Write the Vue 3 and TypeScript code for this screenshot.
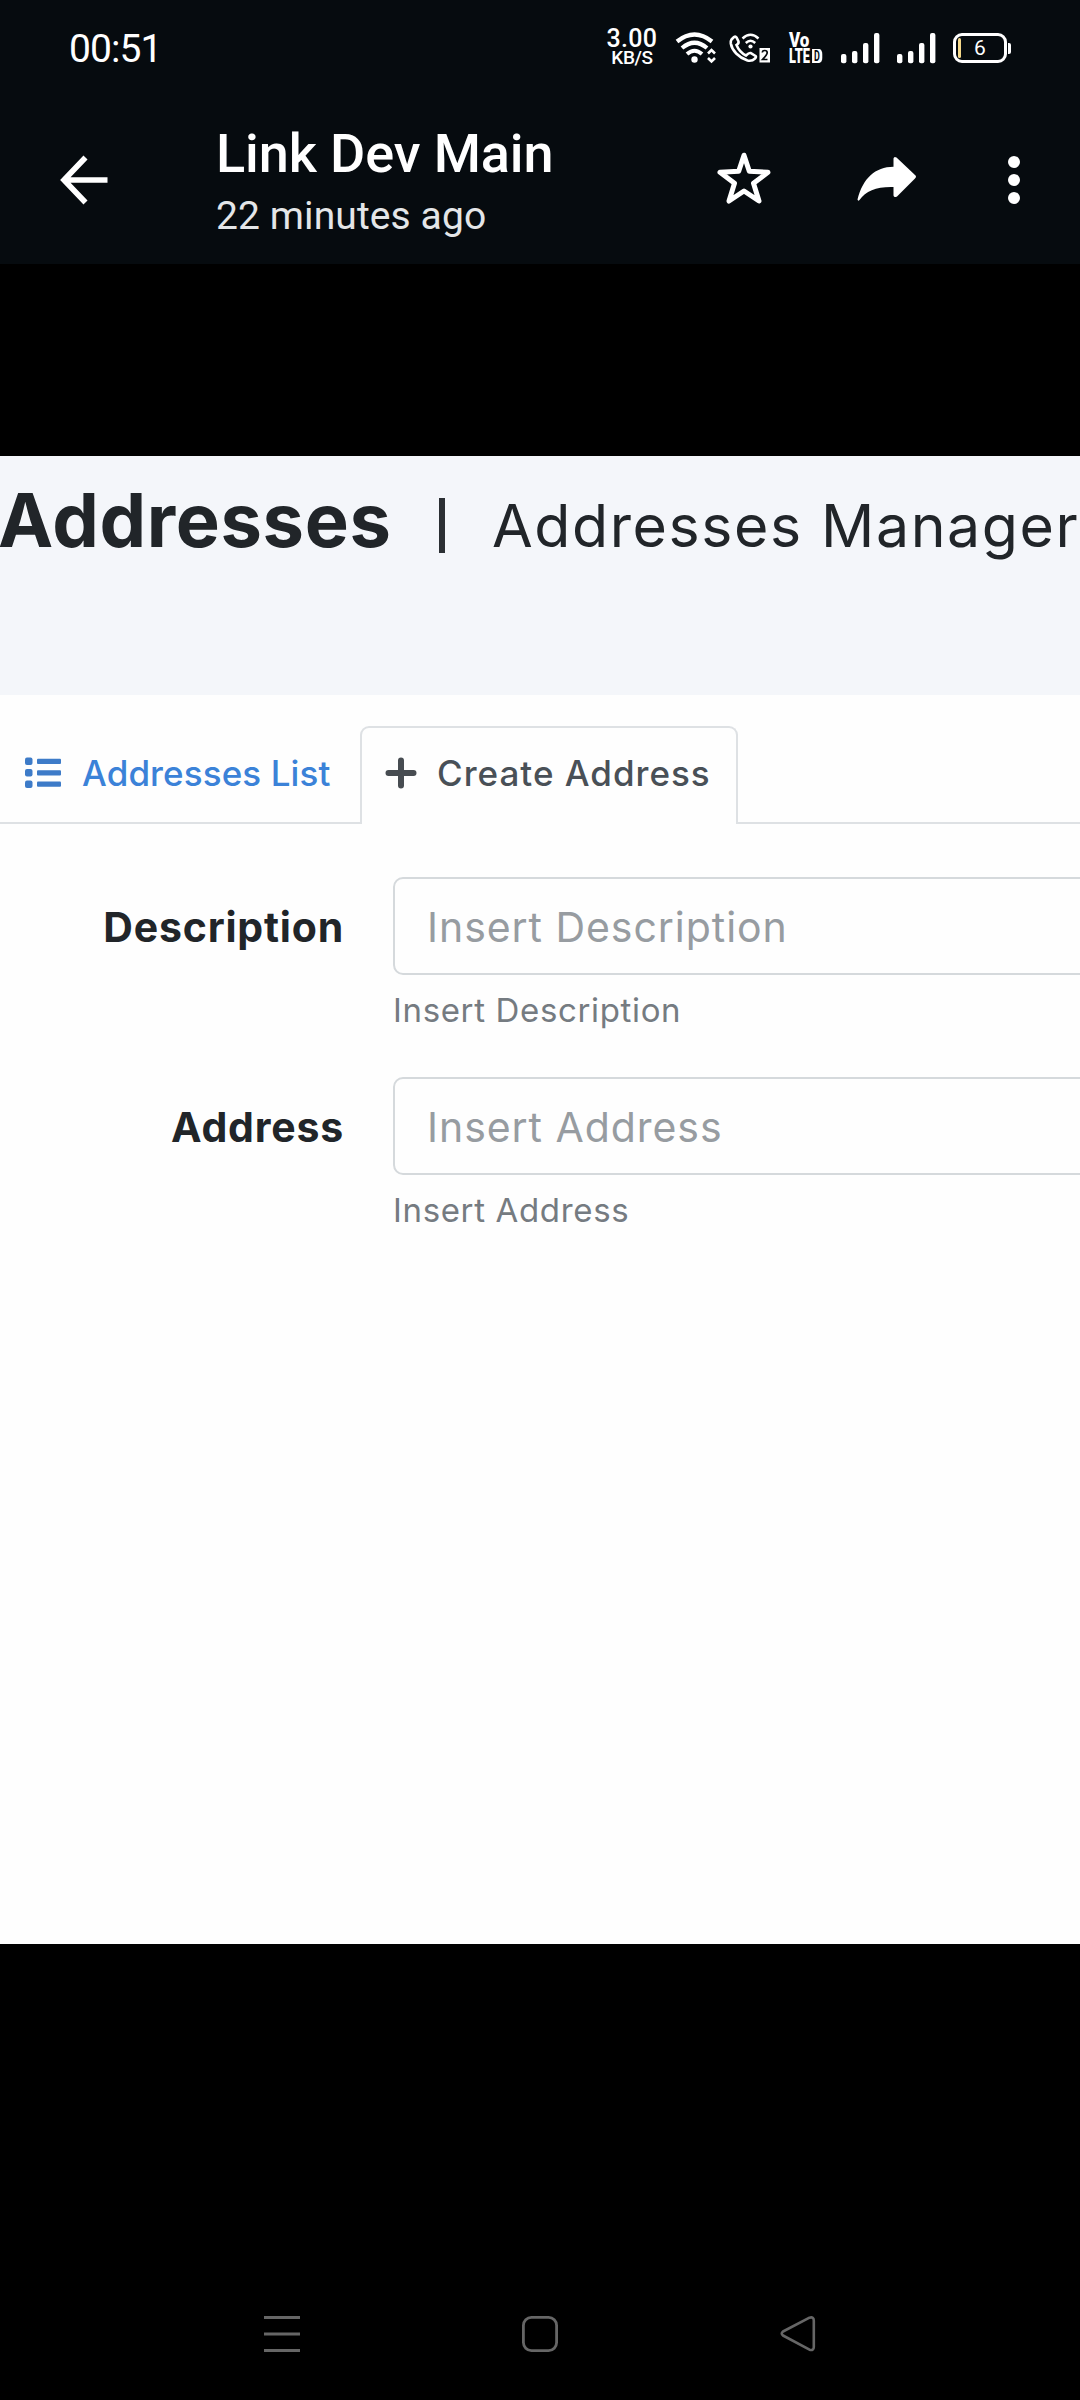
<script setup lang="ts">
interface Field {
  label: string
  hint: string
}

const fields: Field[] = [
  { label: 'Description', hint: 'Insert Description' },
  { label: 'Address', hint: 'Insert Address' },
]

const signals = [0, 1]
</script>

<template>
  <div class="screen">
    <header class="top">
      <div class="status">
        <span class="clock">00:51</span>
        <div class="net">
          <span class="rate">3.00</span>
          <span class="unit">KB/S</span>
        </div>
        <svg class="wifi" width="42" height="32" viewBox="0 0 42 32" fill="none" stroke="#fff">
          <path d="M2 9.5Q19.500 -4.500 37 9.500" stroke-width="4.200" />
          <path d="M7 16Q19.500 5.500 32 16" stroke-width="4.200" />
          <path d="M12 22Q19.500 15.500 27 22" stroke-width="4" />
          <circle cx="19.500" cy="27.500" r="3.200" fill="#fff" stroke="none" />
          <path d="M33 21.500L36.500 18L40 21.500M33 26L36.500 29.500L40 26" stroke-width="2.600" />
        </svg>
        <svg class="call" width="42" height="32" viewBox="0 0 42 32" fill="none" stroke="#fff">
          <path d="M2.500 7.500L5 5Q6.500 4 7.500 5.500L9.500 9.500Q10 11.500 7.500 13C9.500 18 13 21.500 17 23.500Q20 20.500 21.500 21L26.500 24Q27.500 25 26 26.500Q23 29.500 18.500 28.500C9.500 25.500 3 18.500 1.800 11.500Q1.500 9 2.500 7.500Z" stroke-width="2.600" />
          <path d="M13.500 6.500Q21.500 -1 29.500 6.500M16.800 11Q21.500 6.500 26.200 11" stroke-width="2.500" />
          <circle cx="21.500" cy="14.500" r="2.100" fill="#fff" stroke="none" />
          <rect x="30.500" y="16" width="10.500" height="14.500" fill="#fff" stroke="none" />
          <path d="M33.300 20.500Q33.300 18.500 35.800 18.500Q38.200 18.500 38.200 20.700Q38.200 22.500 33.500 27.500H38.500" stroke="#060b0f" stroke-width="1.700" />
        </svg>
        <div class="volte">
          <span class="vo">Vo</span>
          <span class="lte">LTE<b>D</b></span>
        </div>
        <svg v-for="s in signals" :key="s" class="signal" width="39" height="31" viewBox="0 0 39 31" fill="#fff">
          <rect x="0" y="21" width="5.400" height="9.300" rx="2" />
          <rect x="11" y="18" width="5.400" height="12.300" rx="2" />
          <rect x="22" y="10" width="5.400" height="20.300" rx="2" />
          <rect x="33" y="0" width="5.400" height="30.300" rx="2" />
        </svg>
        <div class="battery"><span>6</span></div>
        <i class="nub"></i>
      </div>

      <div class="bar">
        <svg class="back" width="48" height="50" viewBox="0 0 48 50" fill="none" stroke="#fff" stroke-width="5.600">
          <path d="M25.500 2.500L4 25L25.500 47.500M4 25H47.500" />
        </svg>
        <div class="who">
          <span class="name">Link Dev Main</span>
          <span class="ago">22 minutes ago</span>
        </div>
        <svg class="star" width="54" height="54" viewBox="0 0 54 54" fill="none" stroke="#fff" stroke-width="5" stroke-linejoin="round">
          <path d="M27 4.200L32.300 20.300L51 21.300L36.500 32.200L42 50L27 40L12 50L17.500 32.200L3 21.300L21.700 20.300Z" />
        </svg>
        <svg class="share" width="60" height="46" viewBox="0 0 60 46" fill="#fff">
          <path d="M36.500 2.500Q37 0 39.500 1.500L58 19Q60 20.500 58 22.500L40 40.500Q37 42 36.500 39.500V31C20 30.500 9 34.500 2.500 44Q1 45.500 .5 43.500C6 22 18 11 36.500 10.700Z" />
        </svg>
        <svg class="more" width="12" height="48" viewBox="0 0 12 48" fill="#fff">
          <circle cx="6" cy="6" r="6" /><circle cx="6" cy="24" r="6" /><circle cx="6" cy="42" r="6" />
        </svg>
      </div>
    </header>

    <main class="photo">
      <div class="heading">
        <h1>Addresses</h1>
        <i class="rule"></i>
        <span class="sub">Addresses Manager</span>
      </div>

      <nav class="tabs">
        <div class="tab list">
          <svg width="36" height="32" viewBox="0 0 36 32" fill="#3d7bc8">
            <rect x="0" y="0.500" width="7.500" height="7.500" rx="2" /><rect x="0" y="12" width="7.500" height="7.500" rx="2" /><rect x="0" y="23.500" width="7.500" height="7.500" rx="2" />
            <rect x="12" y="1.800" width="24" height="5.200" rx="1" /><rect x="12" y="13.200" width="24" height="5.200" rx="1" /><rect x="12" y="24.600" width="24" height="5.200" rx="1" />
          </svg>
          <span>Addresses List</span>
        </div>
        <div class="tab create">
          <svg width="32" height="32" viewBox="0 0 32 32" fill="none" stroke="#474c51" stroke-width="6" stroke-linecap="round">
            <path d="M16 3.500V28.500M3.500 16H28.500" />
          </svg>
          <span>Create Address</span>
        </div>
        <div class="rest"></div>
      </nav>

      <form class="form">
        <div v-for="f in fields" :key="f.label" class="row">
          <label class="label">{{ f.label }}</label>
          <div class="control">
            <div class="input">{{ f.hint }}</div>
            <small>{{ f.hint }}</small>
          </div>
        </div>
      </form>
    </main>

    <footer class="nav">
      <svg width="36" height="36" viewBox="0 0 36 36" stroke="#666" stroke-width="3"><path d="M0 1.500H36M0 18H36M0 34.500H36" /></svg>
      <svg width="36" height="36" viewBox="0 0 36 36" fill="none" stroke="#666" stroke-width="2.800"><rect x="1.400" y="1.400" width="33.200" height="33.200" rx="8" /></svg>
      <svg width="36" height="36" viewBox="0 0 36 36" fill="none" stroke="#666" stroke-width="2.600" stroke-linejoin="round"><path d="M29.500 1.700L3 15.500Q0.500 17.500 3 19.500L29.500 33.700Q33.800 35 33.800 31V4.500Q33.800 0.500 29.500 1.700Z" /></svg>
    </footer>
  </div>
</template>

<style>
body {
  background: #000;
}
</style>

<style scoped>
.screen {
  width: 1080px;
  height: 2400px;
  overflow: hidden;
  background: #000;
  display: flex;
  flex-direction: column;
  font-family: Roboto, sans-serif;
}
.screen svg {
  display: block;
  flex: none;
}
.top {
  height: 264px;
  background: #060b0f;
  color: #fff;
}
.status {
  display: flex;
  align-items: center;
  height: 96px;
  padding-left: 69px;
  white-space: nowrap;
}
.clock {
  width: 537px;
  padding-top: 1px;
  font-size: 39px;
  letter-spacing: -0.9px;
}
.net {
  width: 52px;
  display: flex;
  flex-direction: column;
  align-items: center;
  font-weight: 500;
}
.rate {
  font-size: 25px;
  line-height: 20px;
  letter-spacing: 0.3px;
}
.unit {
  font-size: 19px;
  line-height: 18px;
  letter-spacing: -0.4px;
}
.wifi {
  margin-left: 17px;
}
.call {
  margin-left: 12px;
}
.volte {
  width: 36px;
  margin: 0 16px 0 18px;
  font-weight: 900;
  display: flex;
  flex-direction: column;
}
.vo {
  font-size: 20px;
  line-height: 16px;
  transform: scaleX(0.85);
  transform-origin: left;
}
.lte {
  display: flex;
  align-items: center;
  font-size: 20px;
  line-height: 16px;
  transform: scaleX(0.64);
  transform-origin: left;
}
.lte b {
  margin-left: 3px;
  flex: none;
  width: 16px;
  height: 14px;
  line-height: 14px;
  font-size: 14px;
  font-weight: 700;
  text-align: center;
  border-radius: 0 5px 5px 0;
  background: #fff;
  color: #060b0f;
}
.signal {
  margin-right: 17px;
}
.battery {
  width: 54px;
  height: 30px;
  box-sizing: border-box;
  border: 3px solid #fff;
  border-radius: 9px;
  display: flex;
  align-items: center;
  font-size: 21px;
}
.battery::before {
  content: "";
  width: 3px;
  height: 20px;
  margin: 0 13px 0 2px;
  border-radius: 2px;
  background: #f5d98a;
}
.nub {
  width: 3px;
  height: 11px;
  margin-left: 1px;
  border-radius: 0 2px 2px 0;
  background: #fff;
}
.bar {
  display: flex;
  align-items: center;
  height: 168px;
  padding-left: 60px;
}
.who {
  width: 501px;
  margin-left: 108px;
  padding-top: 8px;
  display: flex;
  flex-direction: column;
  white-space: nowrap;
}
.name {
  font-size: 54px;
  line-height: 64px;
  font-weight: 500;
  letter-spacing: -0.1px;
}
.ago {
  font-size: 39px;
  line-height: 60px;
  letter-spacing: 0.1px;
  color: #e4e6e8;
}
.star {
  margin-top: -4px;
}
.share {
  margin-left: 86px;
  margin-top: -3px;
}
.more {
  margin-left: 91px;
}
.photo {
  height: 1488px;
  margin-top: 192px;
  overflow: hidden;
  background: #fefefe;
  font-family: Inter, sans-serif;
  white-space: nowrap;
}
.heading {
  display: flex;
  align-items: baseline;
  height: 239px;
  box-sizing: border-box;
  padding-top: 20px;
  background: #f4f6fa;
  color: #212529;
}
h1 {
  flex: none;
  margin: 0 0 0 -2px;
  width: 441px;
  font-size: 74px;
  line-height: 88px;
  font-weight: 700;
  letter-spacing: 0.65px;
}
.rule {
  flex: none;
  width: 6px;
  height: 55px;
  margin-right: 47px;
  transform: translateY(6px);
  background: #2b2f33;
}
.sub {
  font-size: 59px;
  letter-spacing: 1.6px;
}
.tabs {
  display: flex;
  height: 129px;
  padding-top: 31px;
  box-sizing: border-box;
  font-size: 35px;
  font-weight: 500;
}
.tab {
  display: flex;
  align-items: center;
  box-sizing: border-box;
}
.list {
  width: 360px;
  padding-left: 25px;
  padding-bottom: 2px;
  gap: 21px;
  letter-spacing: 0.1px;
  color: #3b82d8;
  border-bottom: 2px solid #dee1e4;
}
.create {
  width: 378px;
  padding-left: 23px;
  padding-bottom: 6px;
  gap: 20px;
  letter-spacing: 1px;
  color: #495057;
  border: 2px solid #dee1e4;
  border-bottom: 0;
  border-radius: 9px 9px 0 0;
}
.rest {
  flex: 1;
  border-bottom: 2px solid #dee1e4;
}
.form {
  padding-top: 53px;
}
.row {
  display: flex;
  height: 200px;
}
.label {
  flex: none;
  width: 344px;
  line-height: 100px;
  text-align: right;
  font-size: 41px;
  font-weight: 700;
  letter-spacing: 0.8px;
  color: #212529;
}
.control {
  flex: none;
  margin-left: 49px;
}
.input {
  width: 760px;
  height: 98px;
  box-sizing: border-box;
  padding-left: 32px;
  border: 2.5px solid #d5d9dc;
  border-radius: 10px;
  line-height: 96px;
  font-size: 41px;
  letter-spacing: 0.95px;
  color: #979ca1;
}
small {
  display: block;
  line-height: 70px;
  font-size: 33px;
  letter-spacing: 0.65px;
  color: #757b81;
}
.nav {
  display: flex;
  gap: 222px;
  margin-top: 372px;
  padding-left: 264px;
}
</style>
